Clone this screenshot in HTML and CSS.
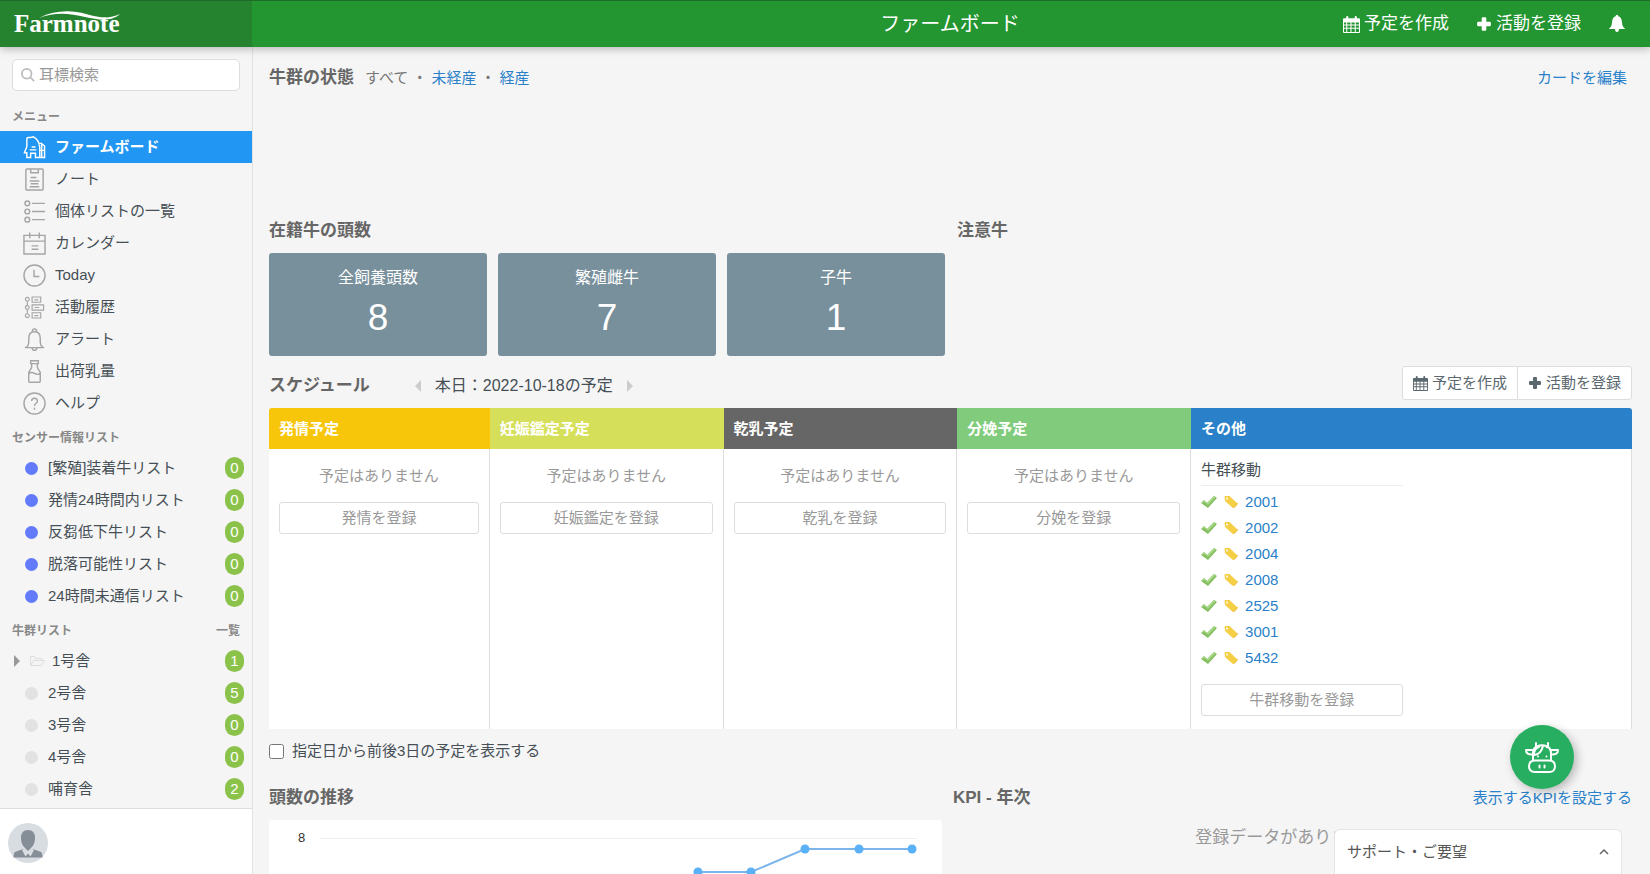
FILE: index.html
```html
<!DOCTYPE html>
<html lang="ja">
<head>
<meta charset="utf-8">
<title>ファームボード</title>
<link rel="stylesheet" href="styles.css">
</head>
<body>
<svg class="defs" aria-hidden="true">
  <symbol id="calendar" viewBox="0 0 16 16">
    <path fill-rule="evenodd" fill="currentColor" d="M1 2h2V1q0-1 1-1t1 1v1h6V1q0-1 1-1t1 1v1h2q1 0 1 1v12q0 1-1 1H1q-1 0-1-1V3q0-1 1-1zM1 6v2h2V6zM4 6v2h3V6zM8 6v2h3V6zM12 6v2h3V6zM1 9v2h2V9zM4 9v2h3V9zM8 9v2h3V9zM12 9v2h3V9zM1 12v3h2v-3zM4 12v3h3v-3zM8 12v3h3v-3zM12 12v3h3v-3z"/>
  </symbol>
  <symbol id="plus" viewBox="0 0 14 14"><path fill="currentColor" d="M5 2q0-1 1-1h2q1 0 1 1v3h3q1 0 1 1v2q0 1-1 1H9v3q0 1-1 1H6q-1 0-1-1V9H2q-1 0-1-1V6q0-1 1-1h3z"/></symbol>
  <symbol id="check" viewBox="0 0 16 14"><path d="M0 8l3-3 3 3 7-7 3 2L7 13z" fill="#86bf60"/><path d="M0 8l3-3 3 3 7-7 1.500 1L7 10 4 7z" fill="#a9d88a"/></symbol>
  <symbol id="tag" viewBox="0 0 16 14"><path d="M1.500 2q0-1 1-1h4L14 8q.8.800 0 1.500l-3 3.200q-.7.600-1.400 0L2 6z" fill="#f5cf45"/><path d="M11 12.700l3-3.200q.8-.7 0-1.500" stroke="#eab93a" fill="none"/><circle cx="4" cy="3.500" r="1" fill="#fff"/></symbol>
</svg>
<header class="topbar">
  <a class="brand" href="#" aria-label="Farmnote">
    <svg width="116" height="26" viewBox="0 0 116 26">
      <text class="logo-text" x="1" y="22">Farmnote</text>
      <path d="M26 8C42 0 58 0 73 4S96 9 107 4C98 12 86 10 72 7S44 1 26 8z" fill="#fff"/>
    </svg>
  </a>
  <div class="topbar-main">
    <h1>ファームボード</h1>
    <nav class="top-actions">
      <a href="#"><svg class="i17"><use href="#calendar"/></svg>予定を作成</a>
      <a href="#"><svg class="i16"><use href="#plus"/></svg>活動を登録</a>
      <a href="#" aria-label="通知"><svg width="18" height="18" viewBox="0 0 18 18"><path fill="#fff" d="M9 0c1 0 1.200.500 1.300 1.200C13 2 13.700 4 14 7.500c.2 3 1 4.500 3.200 6.500H11q0 3-2 3t-2-3H.8C3 12 3.800 10.500 4 7.500 4.300 4 5 2 7.700 1.200 7.800.5 8 0 9 0z"/></svg></a>
    </nav>
  </div>
</header>
<div class="shell">
  <aside class="sidebar">
    <div class="side-scroll">
      <label class="search">
        <svg width="14" height="14" viewBox="0 0 16 16" fill="none" stroke="#bbb" stroke-width="2"><circle cx="6.500" cy="6.500" r="5.500"/><path d="M10 10l5 5"/></svg>
        <input type="text" placeholder="耳標検索" aria-label="耳標検索">
      </label>
      <h2 class="side-title first">メニュー</h2>
      <ul class="menu">
        <li><a class="active" href="#"><svg viewBox="0 0 24 24"><path d="M4 22.500v-5H1.500L4 11V3q0-1.500 1.500-1.500H8L11 .8Q17 4 17.500 12v10.500H13V18H8v4.500zM4 3v8M9 11.500h4M7 14.500h7M16 8.500l3-1 3.500 3v12h-5M18 15h4.500M19.500 8v14"/></svg>ファームボード</a></li>
        <li><a href="#"><svg viewBox="0 0 24 24"><path d="M4 1h16q1 0 1 1v20q0 1-1 1H4q-1 0-1-1V2q0-1 1-1zM8 1v4h8V1M8 10h6M7 13.500h10M8 16.500h8M7 19.500h10"/></svg>ノート</a></li>
        <li><a href="#"><svg viewBox="0 0 24 24"><circle cx="4.500" cy="3.500" r="2.500"/><circle cx="4.500" cy="12" r="2.500"/><circle cx="4.500" cy="20.500" r="2.500"/><path d="M9.500 3.500H23M9.500 12H23M9.500 20.500H23"/></svg>個体リストの一覧</a></li>
        <li><a href="#"><svg viewBox="0 0 24 24"><path d="M1 3.500h22V23H1zM1 9.500h22M7 .5v6M17 .5v6M9 14.500h7M9 18h7"/></svg>カレンダー</a></li>
        <li><a href="#"><svg viewBox="0 0 24 24"><circle cx="12" cy="12" r="11"/><path d="M11.500 6v7H17"/></svg>Today</a></li>
        <li><a href="#"><svg viewBox="0 0 24 24"><g stroke-width="1.200"><circle cx="4.500" cy="3.500" r="2"/><circle cx="4.500" cy="12" r="2"/><circle cx="4.500" cy="20.500" r="2"/><path d="M4.500 5.500V10M4.500 14v4.500M9.500 1h9v5.500h-9zM9.500 9.200h12v5.500h-12zM9.500 17.500h9V23h-9zM12 4h4M12 12h5M12 20.500h4"/></g></svg>活動履歴</a></li>
        <li><a href="#"><svg viewBox="0 0 24 24"><path d="M2 20.500q4-1 4-6.500v-3q0-7 6-7t6 7v3q0 5.500 4 6.500zM10 4q-.5-3 2-3t2 3M9.500 21q.5 2.500 2.500 2.500t2.500-2.500"/></svg>アラート</a></li>
        <li><a href="#"><svg viewBox="0 0 24 24"><path d="M8 .8h8v3H8zM9 4v4l-3 5v9q0 1.200 1 1.200h10q1 0 1-1.200v-9l-3-5V4M6 14q3-2 6 0t6 0"/></svg>出荷乳量</a></li>
        <li><a href="#"><svg viewBox="0 0 24 24"><circle cx="12" cy="12" r="11"/><path d="M9 9.500Q9 6.500 12 6.500t3 3q0 1.500-1.500 2.500T12 14.500M12 16.500v2"/></svg>ヘルプ</a></li>
      </ul>
      <h2 class="side-title">センサー情報リスト</h2>
      <ul class="lists">
        <li><a href="#"><i class="dot blue"></i><span>[繁殖]装着牛リスト</span><b>0</b></a></li>
        <li><a href="#"><i class="dot blue"></i><span>発情24時間内リスト</span><b>0</b></a></li>
        <li><a href="#"><i class="dot blue"></i><span>反芻低下牛リスト</span><b>0</b></a></li>
        <li><a href="#"><i class="dot blue"></i><span>脱落可能性リスト</span><b>0</b></a></li>
        <li><a href="#"><i class="dot blue"></i><span>24時間未通信リスト</span><b>0</b></a></li>
      </ul>
      <h2 class="side-title">牛群リスト<a href="#">一覧</a></h2>
      <ul class="lists">
        <li><a class="folder" href="#"><svg width="32" height="14" viewBox="0 0 32 14"><path d="M0 1l6 6-6 6z" fill="#999"/><path d="M16.500 11.500v-9h4l1 2h6v2M16.500 11.500l3-5h11l-3 5z" fill="none" stroke="#ddd"/></svg><span>1号舎</span><b>1</b></a></li>
        <li><a href="#"><i class="dot"></i><span>2号舎</span><b>5</b></a></li>
        <li><a href="#"><i class="dot"></i><span>3号舎</span><b>0</b></a></li>
        <li><a href="#"><i class="dot"></i><span>4号舎</span><b>0</b></a></li>
        <li><a href="#"><i class="dot"></i><span>哺育舎</span><b>2</b></a></li>
      </ul>
    </div>
    <div class="user">
      <svg width="40" height="40" viewBox="0 0 40 40"><circle cx="20" cy="20" r="20" fill="#d8dde2"/><path d="M20 7q7 0 7 8 0 6-4 10l-3 3-3-3q-4-4-4-10 0-8 7-8z" fill="#858d96"/><path d="M15 26l5 5 5-5 8 3q1.500 1 1.500 5.500h-29Q5.500 30 7 29z" fill="#858d96"/><path d="M15 26l5 3.500 5-3.500 1 1-3.500 6.500L20 30.500l-2.500 3L14 27z" fill="#d8dde2"/></svg>
    </div>
  </aside>
  <main class="main">
    <section class="herd">
      <div class="row">
        <h2>牛群の状態</h2>
        <p class="filters">すべて<span>・</span><a href="#">未経産</a><span>・</span><a href="#">経産</a></p>
        <a class="edit" href="#">カードを編集</a>
      </div>
    </section>
    <section class="heads">
      <div>
        <h2>在籍牛の頭数</h2>
        <div class="cards">
          <a class="card" href="#"><span>全飼養頭数</span><strong>8</strong></a>
          <a class="card" href="#"><span>繁殖雌牛</span><strong>7</strong></a>
          <a class="card" href="#"><span>子牛</span><strong>1</strong></a>
        </div>
      </div>
      <div><h2>注意牛</h2></div>
    </section>
    <section>
      <div class="row schedule-head">
        <h2>スケジュール</h2>
        <div class="day">
          <button type="button" aria-label="前日"><svg width="8" height="12" viewBox="0 0 8 12"><path d="M7 0v12L1 6z" fill="#ccc"/></svg></button>
          本日：2022-10-18の予定
          <button type="button" aria-label="翌日"><svg width="8" height="12" viewBox="0 0 8 12"><path d="M1 0v12l6-6z" fill="#ccc"/></svg></button>
        </div>
        <div class="group">
          <button type="button"><svg class="i15"><use href="#calendar"/></svg>予定を作成</button>
          <button type="button"><svg class="i14"><use href="#plus"/></svg>活動を登録</button>
        </div>
      </div>
      <table class="schedule">
        <colgroup><col class="c1"><col class="c2"><col class="c2"><col class="c2"><col></colgroup>
        <thead><tr><th class="yellow">発情予定</th><th class="lime">妊娠鑑定予定</th><th class="gray">乾乳予定</th><th class="green">分娩予定</th><th class="blue">その他</th></tr></thead>
        <tbody><tr>
          <td><p>予定はありません</p><button type="button">発情を登録</button></td>
          <td><p>予定はありません</p><button type="button">妊娠鑑定を登録</button></td>
          <td><p>予定はありません</p><button type="button">乾乳を登録</button></td>
          <td><p>予定はありません</p><button type="button">分娩を登録</button></td>
          <td class="other">
            <div class="moves">
              <h3>牛群移動</h3>
              <ul>
                <li><svg><use href="#check"/></svg><svg><use href="#tag"/></svg><a href="#">2001</a></li>
                <li><svg><use href="#check"/></svg><svg><use href="#tag"/></svg><a href="#">2002</a></li>
                <li><svg><use href="#check"/></svg><svg><use href="#tag"/></svg><a href="#">2004</a></li>
                <li><svg><use href="#check"/></svg><svg><use href="#tag"/></svg><a href="#">2008</a></li>
                <li><svg><use href="#check"/></svg><svg><use href="#tag"/></svg><a href="#">2525</a></li>
                <li><svg><use href="#check"/></svg><svg><use href="#tag"/></svg><a href="#">3001</a></li>
                <li><svg><use href="#check"/></svg><svg><use href="#tag"/></svg><a href="#">5432</a></li>
              </ul>
              <button type="button">牛群移動を登録</button>
            </div>
          </td>
        </tr></tbody>
      </table>
      <label class="range"><input type="checkbox">指定日から前後3日の予定を表示する</label>
    </section>
    <section class="bottom">
      <div>
        <h2>頭数の推移</h2>
        <div class="chart">
          <svg viewBox="0 0 673 200" role="img" aria-label="頭数の推移">
            <path d="M51 18.500h597" stroke="#eee"/>
            <text class="axis" x="29" y="22">8</text>
            <path d="M429 52h53l54-23h107" fill="none" stroke="#7cb5ec" stroke-width="2"/>
            <g fill="#5ab1f7"><circle cx="429" cy="52" r="4.500"/><circle cx="482" cy="52" r="4.500"/><circle cx="536" cy="29" r="4.500"/><circle cx="590" cy="29" r="4.500"/><circle cx="643" cy="29" r="4.500"/></g>
          </svg>
        </div>
      </div>
      <div>
        <div class="row kpi-head"><h2>KPI - 年次</h2><a class="kpi-link" href="#">表示するKPIを設定する</a></div>
        <p class="empty">登録データがありません</p>
      </div>
    </section>
  </main>
</div>
<button class="fab" type="button" aria-label="チャット">
  <svg width="34" height="31" viewBox="0 0 34 31" fill="none" stroke="#fff" stroke-width="2" stroke-linecap="round" stroke-linejoin="round"><path d="M11 1v3q0 1.500 1.500 1M23 1v3q0 1.500-1.500 1M12 4.500Q17 2 22 4.500q4 1.500 4 7V18M12 4.500q-4 1.500-4 7V18M7.500 8H1q0 5 7 4.500M26.500 8H33q0 5-7 4.500M9 13q7-.5 9-9M9 11q1-5 5-6M10 18.500h14q6 0 6 5.800T24 30H10q-6 0-6-5.700t6-5.800zM14.500 23.500v2M19.500 23.500v2M13 14.500v.1M21.500 14.500v.1"/></svg>
</button>
<button class="support" type="button"><span>サポート・ご要望</span><svg width="10" height="8" viewBox="0 0 10 8"><path d="M1 6l4-4 4 4" fill="none" stroke="#666" stroke-width="1.500"/></svg></button>
</body>
</html>
```
FILE: styles.css
```css
* { box-sizing: border-box; }
body {
  margin: 0;
  height: 100vh;
  overflow: hidden;
  display: flex;
  flex-direction: column;
  background: #f5f5f5;
  color: #454f55;
  font: 15px/24px "Liberation Sans", "Noto Sans CJK JP", sans-serif;
}
h1, h2, h3, p, ul { margin: 0; padding: 0; }
ul { list-style: none; }
a { color: #2a81c9; text-decoration: none; }
button { font: inherit; cursor: pointer; }
svg { flex: none; }
.defs { position: absolute; width: 0; height: 0; }
.i17 { width: 17px; height: 17px; }
.i16 { width: 16px; height: 16px; }
.i15 { width: 15px; height: 15px; }
.i14 { width: 14px; height: 14px; }

.topbar {
  display: flex;
  flex: none;
  height: 47px;
  background: #239531;
  border-top: 1px solid #1d6b27;
  box-shadow: 0 2px 8px rgba(0, 0, 0, .25);
  z-index: 1;
}
.brand { width: 252px; padding: 9px 13px; background: #25832f; }
.brand svg { display: block; }
.logo-text { font: bold 25px "Liberation Serif", serif; fill: #fff; }
.topbar-main {
  flex: 1;
  display: grid;
  grid-template-columns: 1fr auto 1fr;
  align-items: center;
  padding-right: 24px;
  color: #fff;
}
.topbar h1 { grid-column: 2; padding-left: 22px; font-size: 20px; font-weight: 400; }
.top-actions { display: flex; justify-content: flex-end; gap: 27px; font-size: 17px; }
.top-actions a { display: flex; align-items: center; gap: 4px; color: #fff; }

.shell { flex: 1; min-height: 0; display: flex; }
.sidebar {
  width: 253px;
  flex: none;
  display: flex;
  flex-direction: column;
  border-right: 1px solid #e2e2e2;
}
.side-scroll { flex: 1; min-height: 0; overflow: hidden; padding-top: 12px; }
.search {
  display: flex;
  align-items: center;
  gap: 4px;
  height: 32px;
  margin: 0 12px 12px;
  padding: 0 8px;
  background: #fff;
  border: 1px solid #ddd;
  border-radius: 5px;
}
.search input {
  flex: 1;
  min-width: 0;
  padding: 0;
  border: 0;
  outline: 0;
  background: none;
  font: inherit;
}
.search input::placeholder { color: #999; }
.side-title {
  display: flex;
  justify-content: space-between;
  padding: 5px 12px 0;
  font-size: 12px;
  line-height: 28px;
  color: #888;
}
.side-title.first { padding-top: 0; }
.side-title a { color: inherit; }
.menu a, .lists a { display: flex; align-items: center; height: 32px; color: #454f55; }
.menu a { gap: 9px; padding-left: 23px; }
.menu svg { width: 23px; height: 23px; fill: none; stroke: #a5a5a5; stroke-width: 1.5; }
.menu .active { background: #2196f3; color: #fff; font-weight: 700; }
.menu .active svg { stroke: #fff; }
.lists a { gap: 10px; padding: 0 8px 0 25px; }
.lists .folder { padding-left: 14px; gap: 6px; }
.lists span { flex: 1; }
.lists b {
  width: 19px;
  border-radius: 10px;
  background: #8bc34a;
  color: #fff;
  font-weight: 400;
  line-height: 22px;
  text-align: center;
}
.dot { width: 13px; height: 13px; border-radius: 50%; background: #e2e2e2; }
.dot.blue { background: #637bfa; }
.user { height: 66px; padding: 14px 8px; background: #fff; border-top: 1px solid #ddd; }

.main { flex: 1; min-width: 0; padding: 16px 18px 0 16px; }
.main h2 { font-size: 17px; color: #666; }
.row { display: flex; align-items: center; }
.herd { height: 156px; }
.filters { padding-left: 11px; line-height: 30px; color: #777; }
.filters span { padding: 0 4px; }
.edit { margin-left: auto; padding-right: 5px; }
.heads { display: grid; grid-template-columns: 676fr 675fr; gap: 12px; }
.cards { display: grid; grid-template-columns: repeat(3, 1fr); gap: 11px; margin-top: 10px; }
.card {
  display: flex;
  flex-direction: column;
  align-items: center;
  height: 103px;
  padding-top: 13px;
  background: #788f9c;
  border-radius: 3px;
  color: #fff;
  font-size: 16px;
}
.card strong { margin-top: 6px; font-size: 37px; font-weight: 400; line-height: 44px; }
.schedule-head { height: 52px; padding-top: 8px; }
.day { display: flex; align-items: center; gap: 11px; margin-left: 42px; font-size: 16px; }
.day button { display: flex; padding: 0 2px; border: 0; background: none; }
.group { display: flex; margin: 0 0 6px auto; }
.group button {
  display: flex;
  align-items: center;
  gap: 4px;
  height: 34px;
  padding: 0 10px;
  border: 1px solid #ddd;
  border-radius: 3px 0 0 3px;
  background: #fff;
  color: #5b6870;
}
.group button + button { margin-left: -1px; border-radius: 0 3px 3px 0; }

.schedule { width: 100%; border-collapse: separate; border-spacing: 0; table-layout: fixed; }
.c1 { width: 16.2%; }
.c2 { width: 17.15%; }
.schedule th { height: 41px; padding: 0 10px; text-align: left; color: #fff; }
.schedule th:first-child { border-radius: 3px 0 0 0; }
.schedule th:last-child { border-radius: 0 3px 0 0; }
.yellow { background: #f7c509; }
.lime { background: #d6df5a; }
.gray { background: #666; }
.green { background: #80cc7c; }
.blue { background: #2a81c9; }
.schedule td {
  height: 280px;
  padding: 15px 10px 0;
  vertical-align: top;
  background: #fff;
  border-right: 1px solid #ddd;
  color: #999;
  text-align: center;
}
.schedule td button {
  width: 100%;
  height: 32px;
  border: 1px solid #ddd;
  border-radius: 3px;
  background: #fff;
  color: #999;
}
.schedule td p { margin-bottom: 14px; }
.schedule .other { padding-top: 9px; }
.moves { width: 48%; text-align: left; }
.moves button { text-align: center; }
.moves h3 {
  padding-bottom: 3px;
  border-bottom: 1px solid #eee;
  color: #454f55;
  font-size: 15px;
  font-weight: 400;
}
.moves ul { padding: 3px 0 13px; }
.moves li { display: flex; align-items: center; gap: 6px; height: 26px; }
.moves li svg { width: 16px; height: 14px; }
.range { display: flex; align-items: center; gap: 8px; height: 44px; }
.range input { width: 15px; height: 15px; margin: 0; }
.bottom { display: grid; grid-template-columns: 673fr 679fr; gap: 11px; padding-top: 13px; }
.chart { margin-top: 10px; background: #fff; border-radius: 3px; }
.chart svg { display: block; width: 100%; }
.axis { font-size: 13px; fill: #333; }
.kpi-link { margin-left: auto; }
.empty { margin-top: 16px; padding-right: 8px; color: #999; font-size: 17px; text-align: center; }

.fab {
  position: fixed;
  right: 76px;
  bottom: 85px;
  display: grid;
  place-items: center;
  width: 64px;
  height: 64px;
  border: 0;
  border-radius: 50%;
  background: #27ae60;
  box-shadow: 3px 3px 10px rgba(0, 0, 0, .25);
  z-index: 2;
}
.support {
  position: fixed;
  right: 28px;
  bottom: 0;
  display: flex;
  align-items: center;
  justify-content: space-between;
  width: 288px;
  height: 45px;
  padding: 0 12px;
  border: 1px solid #e5e5e5;
  border-bottom: 0;
  border-radius: 6px 6px 0 0;
  background: #fff;
  color: #555;
  z-index: 2;
}
.empty { overflow: hidden; white-space: nowrap; }
```
